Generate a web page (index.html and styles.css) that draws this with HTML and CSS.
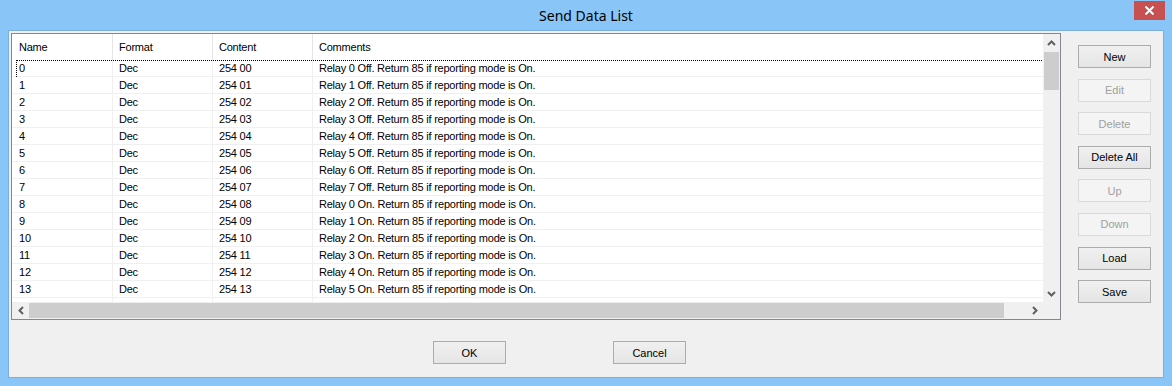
FILE: index.html
```html
<!DOCTYPE html>
<html lang="en">
<head>
    <meta charset="UTF-8">
    <title>Send Data List</title>
    <link rel="stylesheet" href="styles.css">
</head>
<body>
    <div class="window">
        <div class="titlebar">
            <span class="title">Send Data List</span>
            <div class="close">
                <svg width="11" height="9" viewBox="0 0 11 9"><path d="M1.5 0.5 L9.5 8.5 M9.5 0.5 L1.5 8.5" stroke="#fff" stroke-width="2"/></svg>
            </div>
        </div>

        <div class="client">
            <div class="main">
                <!-- List view -->
                <div class="list">
                    <div class="view">
                        <div class="row head">
                            <div class="cell c1">Name</div>
                            <div class="cell c2">Format</div>
                            <div class="cell c3">Content</div>
                            <div class="cell c4">Comments</div>
                        </div>
                        <div class="row focus"><div class="cell c1">0</div><div class="cell c2">Dec</div><div class="cell c3">254 00</div><div class="cell c4">Relay 0 Off. Return 85 if reporting mode is On.</div></div>
                        <div class="row"><div class="cell c1">1</div><div class="cell c2">Dec</div><div class="cell c3">254 01</div><div class="cell c4">Relay 1 Off. Return 85 if reporting mode is On.</div></div>
                        <div class="row"><div class="cell c1">2</div><div class="cell c2">Dec</div><div class="cell c3">254 02</div><div class="cell c4">Relay 2 Off. Return 85 if reporting mode is On.</div></div>
                        <div class="row"><div class="cell c1">3</div><div class="cell c2">Dec</div><div class="cell c3">254 03</div><div class="cell c4">Relay 3 Off. Return 85 if reporting mode is On.</div></div>
                        <div class="row"><div class="cell c1">4</div><div class="cell c2">Dec</div><div class="cell c3">254 04</div><div class="cell c4">Relay 4 Off. Return 85 if reporting mode is On.</div></div>
                        <div class="row"><div class="cell c1">5</div><div class="cell c2">Dec</div><div class="cell c3">254 05</div><div class="cell c4">Relay 5 Off. Return 85 if reporting mode is On.</div></div>
                        <div class="row"><div class="cell c1">6</div><div class="cell c2">Dec</div><div class="cell c3">254 06</div><div class="cell c4">Relay 6 Off. Return 85 if reporting mode is On.</div></div>
                        <div class="row"><div class="cell c1">7</div><div class="cell c2">Dec</div><div class="cell c3">254 07</div><div class="cell c4">Relay 7 Off. Return 85 if reporting mode is On.</div></div>
                        <div class="row"><div class="cell c1">8</div><div class="cell c2">Dec</div><div class="cell c3">254 08</div><div class="cell c4">Relay 0 On. Return 85 if reporting mode is On.</div></div>
                        <div class="row"><div class="cell c1">9</div><div class="cell c2">Dec</div><div class="cell c3">254 09</div><div class="cell c4">Relay 1 On. Return 85 if reporting mode is On.</div></div>
                        <div class="row"><div class="cell c1">10</div><div class="cell c2">Dec</div><div class="cell c3">254 10</div><div class="cell c4">Relay 2 On. Return 85 if reporting mode is On.</div></div>
                        <div class="row"><div class="cell c1">11</div><div class="cell c2">Dec</div><div class="cell c3">254 11</div><div class="cell c4">Relay 3 On. Return 85 if reporting mode is On.</div></div>
                        <div class="row"><div class="cell c1">12</div><div class="cell c2">Dec</div><div class="cell c3">254 12</div><div class="cell c4">Relay 4 On. Return 85 if reporting mode is On.</div></div>
                        <div class="row"><div class="cell c1">13</div><div class="cell c2">Dec</div><div class="cell c3">254 13</div><div class="cell c4">Relay 5 On. Return 85 if reporting mode is On.</div></div>
                        <div class="row"><div class="cell c1"></div><div class="cell c2"></div><div class="cell c3"></div><div class="cell c4"></div></div>
                    </div>

                    <div class="vscroll">
                        <div class="arrow">
                            <svg width="9" height="6" viewBox="0 0 9 6"><path d="M1 5 L4.5 1.5 L8 5" fill="none" stroke="#606060" stroke-width="2"/></svg>
                        </div>
                        <div class="vtrack"><div class="vthumb"></div></div>
                        <div class="arrow">
                            <svg width="9" height="6" viewBox="0 0 9 6"><path d="M1 1 L4.5 4.5 L8 1" fill="none" stroke="#606060" stroke-width="2"/></svg>
                        </div>
                    </div>

                    <div class="hscroll">
                        <div class="arrow">
                            <svg width="6" height="9" viewBox="0 0 6 9"><path d="M5 1 L1.5 4.5 L5 8" fill="none" stroke="#606060" stroke-width="2"/></svg>
                        </div>
                        <div class="htrack"><div class="hthumb"></div></div>
                        <div class="arrow">
                            <svg width="6" height="9" viewBox="0 0 6 9"><path d="M1 1 L4.5 4.5 L1 8" fill="none" stroke="#606060" stroke-width="2"/></svg>
                        </div>
                    </div>

                    <div class="corner"></div>
                </div>

                <!-- Side buttons -->
                <div class="side">
                    <button class="btn">New</button>
                    <button class="btn" disabled>Edit</button>
                    <button class="btn" disabled>Delete</button>
                    <button class="btn">Delete All</button>
                    <button class="btn" disabled>Up</button>
                    <button class="btn" disabled>Down</button>
                    <button class="btn">Load</button>
                    <button class="btn">Save</button>
                </div>
            </div>

            <div class="footer">
                <button class="btn">OK</button>
                <button class="btn">Cancel</button>
            </div>
        </div>
    </div>
</body>
</html>
```

FILE: styles.css
```css
body {
    margin: 0;
    background-color: #89c5f7;
    font-family: "Liberation Sans", Arial, sans-serif;
    font-size: 11px;
    color: #000;
}
.window {
    width: 1172px;
    height: 386px;
    display: flex;
    flex-direction: column;
    background-color: #89c5f7; /* Win8 light blue frame */
    overflow: hidden;
}
.titlebar {
    position: relative;
    height: 30px;
    display: flex;
    justify-content: center;
    align-items: center;
}
.title {
    font-family: "Noto Sans", "Open Sans", sans-serif;
    font-size: 14px;
    color: #000;
    margin-top: 1px;
}
.close {
    position: absolute;
    top: 1px;
    right: 7px;
    width: 31px;
    height: 19px;
    background-color: #c75050;
    display: flex;
    justify-content: center;
    align-items: center;
}
.client {
    margin: 0 8px;
    height: 348px;
    box-sizing: border-box;
    background-color: #f0f0f0;
    border: 1px solid #7aaee0;
    padding: 2px 0 0 2px;
}
.main {
    display: flex;
}

/* List view */
.list {
    width: 1050px;
    height: 287px;
    box-sizing: border-box;
    border: 1px solid #828790;
    background-color: #fff;
    display: grid;
    grid-template-columns: 1fr 17px;
    grid-template-rows: 1fr 17px;
    overflow: hidden;
}
.view {
    overflow: hidden;
    letter-spacing: -0.22px;
}
.row {
    position: relative;
    display: flex;
    height: 17px;
    line-height: 16px;
}
.row.head {
    height: 26px;
    line-height: 27px;
}
.cell {
    box-sizing: border-box;
    border-right: 1px solid #f0f0f0;
    border-bottom: 1px solid #f0f0f0;
    padding-left: 6px;
    white-space: nowrap;
}
.head .cell {
    border-bottom: none;
    border-right-color: #e5e5e5;
}
.c1 { width: 101px; padding-left: 7px; }
.c2 { width: 100px; }
.c3 { width: 100px; }
.c4 { flex: 1; border-right: none; }
.focus::after {
    content: "";
    position: absolute;
    left: 4px;
    right: 1px;
    top: 0;
    height: 16px;
    border: 1px dotted #000;
    border-right: none;
    border-bottom: none;
}

/* Scrollbars */
.vscroll {
    background-color: #f0f0f0;
    display: flex;
    flex-direction: column;
}
.hscroll {
    background-color: #f0f0f0;
    display: flex;
}
.arrow {
    width: 17px;
    height: 17px;
    flex: none;
    display: flex;
    justify-content: center;
    align-items: center;
}
.vtrack {
    flex: 1;
    padding: 1px 1px 0;
}
.vthumb {
    height: 38px;
    background-color: #cdcdcd;
}
.htrack {
    flex: 1;
    padding: 1px 0;
}
.hthumb {
    width: 975px;
    height: 15px;
    background-color: #cdcdcd;
}
.corner {
    background-color: #f0f0f0;
}

/* Buttons */
.side {
    display: flex;
    flex-direction: column;
    gap: 10.6px;
    margin-left: 17px;
    padding-top: 12px;
}
.btn {
    width: 73px;
    height: 23px;
    box-sizing: border-box;
    border: 1px solid #acacac;
    background: linear-gradient(#f0f0f0, #e5e5e5);
    font-family: "Liberation Sans", Arial, sans-serif;
    font-size: 11px;
    color: #000;
    padding: 0;
}
.btn:disabled {
    border-color: #d9d9d9;
    background: #f4f4f4;
    color: #a0a0a0;
}
.footer {
    display: flex;
    gap: 107px;
    padding-left: 422px;
    margin-top: 21px;
}
```
